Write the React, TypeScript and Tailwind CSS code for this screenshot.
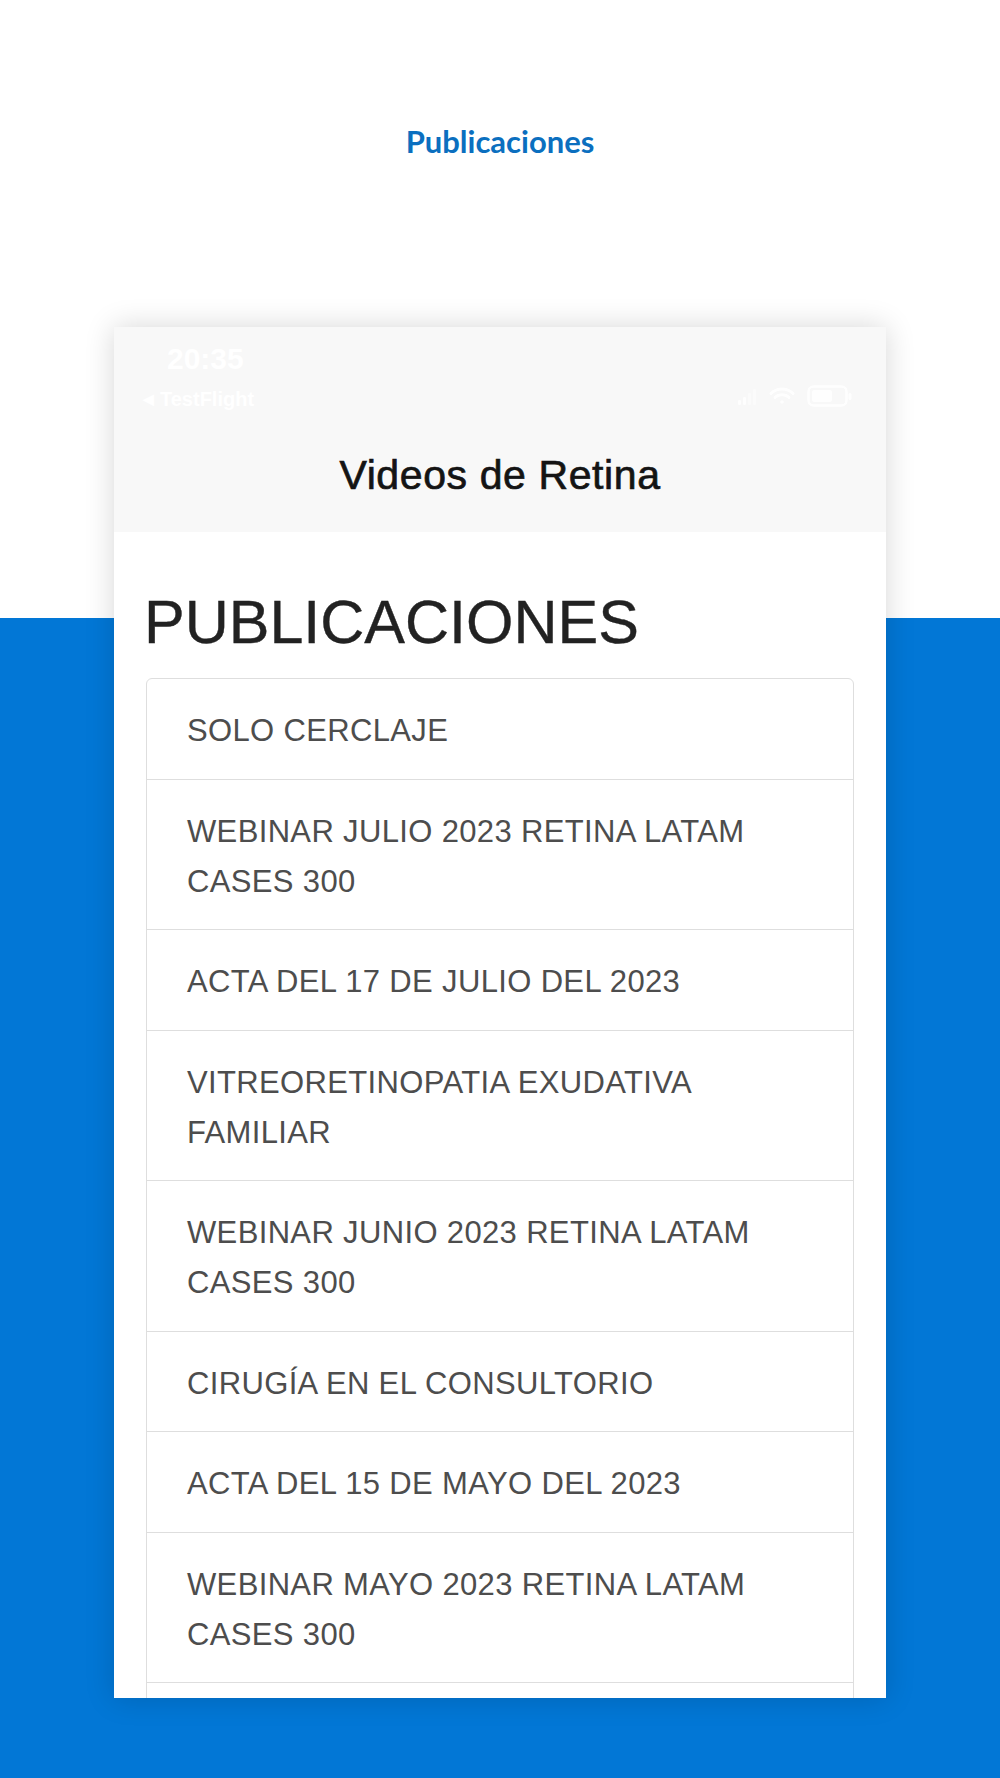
const ITEMS: string[] = [
  "SOLO CERCLAJE",
  "WEBINAR JULIO 2023 RETINA LATAM CASES 300",
  "ACTA DEL 17 DE JULIO DEL 2023",
  "VITREORETINOPATIA EXUDATIVA FAMILIAR",
  "WEBINAR JUNIO 2023 RETINA LATAM CASES 300",
  "CIRUGÍA EN EL CONSULTORIO",
  "ACTA DEL 15 DE MAYO DEL 2023",
  "WEBINAR MAYO 2023 RETINA LATAM CASES 300",
];

const phoneFont = "font-['Liberation_Sans',Arial,sans-serif]";

function StatusIcons() {
  return (
    <div className="flex items-center gap-[12px] pt-[38px] pr-[33px] opacity-90">
      <svg width="20" height="20" viewBox="0 0 20 20" fill="#ffffff">
        <rect x="1" y="14" width="3" height="5" rx="1" />
        <rect x="6" y="11" width="3" height="8" rx="1" />
        <rect x="11" y="7" width="3" height="12" rx="1" opacity="0.6" />
        <rect x="16" y="3" width="3" height="16" rx="1" opacity="0.6" />
      </svg>
      <svg width="26" height="20" viewBox="0 0 26 20" fill="none" stroke="#ffffff" strokeWidth="3" strokeLinecap="round">
        <path d="M2 7.5a16 16 0 0 1 22 0" />
        <path d="M6 11.5a10 10 0 0 1 14 0" />
        <circle cx="13" cy="16" r="1.8" fill="#ffffff" stroke="none" />
      </svg>
      <svg width="46" height="24" viewBox="0 0 46 24" fill="none">
        <rect x="1.5" y="2.5" width="38" height="19" rx="5" stroke="#ffffff" strokeWidth="2.5" />
        <rect x="5" y="6" width="20" height="12" rx="2" fill="#ffffff" />
        <rect x="41.5" y="9" width="3" height="7" rx="1.5" fill="#ffffff" />
      </svg>
    </div>
  );
}

export default function App() {
  return (
    <div className="flex h-[1778px] w-[1000px] flex-col items-center bg-[linear-gradient(to_bottom,#ffffff_618px,#0277d6_618px)] pt-[123px]">
      <h1 className="font-['Lato',sans-serif] text-[31px] leading-[37px] font-bold text-[#0b6fbf]">
        Publicaciones
      </h1>

      <div
        className={`${phoneFont} mt-[167px] h-[1371px] w-[772px] overflow-hidden bg-white shadow-[0_0_28px_rgba(0,0,0,0.16)]`}
      >
        <header className="h-[205px] bg-[#f8f8f8]">
          <div className="flex h-[100px] justify-between">
            <div className="flex flex-col pt-[14px] pl-[29px]">
              <span className="pl-[24px] text-[30px] leading-[36px] font-bold text-white">20:35</span>
              <span className="mt-[10px] flex items-center gap-[6px] text-[20px] leading-[24px] font-bold text-white">
                <span className="text-[14px]">◀</span>
                TestFlight
              </span>
            </div>
            <StatusIcons />
          </div>
          <h2 className="mt-[24px] text-center text-[41px] leading-[48px] tracking-[0.6px] text-[#141414] [-webkit-text-stroke:0.7px_#141414]">
            Videos de Retina
          </h2>
        </header>

        <main className="px-[32px] pt-[60px]">
          <h3 className="-ml-[2px] text-[61px] leading-[61px] text-[#222222] [-webkit-text-stroke:0.4px_#222222]">
            PUBLICACIONES
          </h3>

          <ul className="mt-[25px] divide-y divide-[#dedede] rounded-[6px] border border-[#dedede]">
            {ITEMS.map((item) => (
              <li
                key={item}
                className="pt-[27px] pr-[40px] pb-[22.5px] pl-[40px] text-[31px] leading-[50px] tracking-[0.35px] text-[#4d4d4d]"
              >
                {item}
              </li>
            ))}
            <li className="h-[100px]" />
          </ul>
        </main>
      </div>
    </div>
  );
}
